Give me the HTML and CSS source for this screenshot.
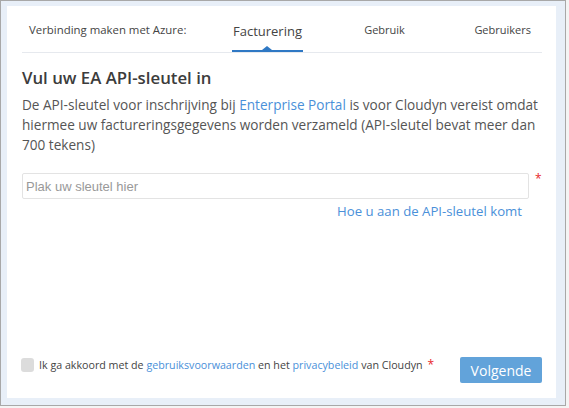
FILE: index.html
```html
<!DOCTYPE html>
<html lang="nl">
<head>
<meta charset="utf-8">
<title>Cloudyn - Facturering</title>
<link rel="stylesheet" href="styles.css">
</head>
<body>
<div class="frame">
  <div class="card">
    <nav class="tabs">
      <div class="tabs-label">Verbinding maken met Azure:</div>
      <div class="tab tab-active"><span class="tab-text">Facturering</span></div>
      <div class="tab">Gebruik</div>
      <div class="tab tab-last">Gebruikers</div>
    </nav>
    <main class="content">
      <h1 class="title">Vul uw EA API-sleutel in</h1>
      <p class="desc">De API-sleutel voor inschrijving bij <a class="link" href="#">Enterprise Portal</a> is voor Cloudyn vereist omdat hiermee uw factureringsgegevens worden verzameld (API-sleutel bevat meer dan 700 tekens)</p>
      <div class="field">
        <input class="key-input" type="text" placeholder="Plak uw sleutel hier">
        <span class="req">*</span>
      </div>
      <div class="help"><a class="link" href="#">Hoe u aan de API-sleutel komt</a></div>
    </main>
    <footer class="footer">
      <label class="agree">
        <span class="checkbox"></span>
        <span>Ik ga akkoord met de <a class="link" href="#">gebruiksvoorwaarden</a> en het <a class="link" href="#">privacybeleid</a> van Cloudyn <span class="req req-inline">*</span></span>
      </label>
      <button class="btn" type="button">Volgende</button>
    </footer>
  </div>
</div>
</body>
</html>
```

FILE: styles.css
```css
* { box-sizing: border-box; }
html, body { margin: 0; padding: 0; background: #f4f4f4; }
body { font-family: "Open Sans", "Noto Sans", sans-serif; color: #555; }

.frame {
  width: 566px;
  height: 406px;
  border: 1px solid #a8a8a8;
  background: #e8eff8;
  padding: 5px 9px 7px 6px;
}
.card {
  height: 100%;
  background: #fff;
  padding: 0 14px 14px 15px;
  display: flex;
  flex-direction: column;
}

.tabs {
  display: grid;
  grid-template-columns: 187px 117px 117px 98px;
  align-items: center;
  height: 47px;
  border-bottom: 1px solid #e6e9ee;
}
.tabs-label { padding-left: 7px; font-size: 11.4px; color: #444; }
.tab { text-align: center; font-size: 11px; color: #444; }
.tab-last { text-align: right; padding-right: 10px; }
.tab-active { font-size: 13px; color: #444; align-self: end; }
.tab-text {
  position: relative;
  display: inline-block;
  padding: 0 1px 10px;
  border-bottom: 2px solid #2f78c4;
}
.tab-text::after {
  content: "";
  position: absolute;
  left: 50%;
  bottom: 0;
  margin-left: -5px;
  border-left: 5px solid transparent;
  border-right: 5px solid transparent;
  border-bottom: 4px solid #2f78c4;
}

.content { flex: 1; }
.title {
  margin: 13px 0 0;
  font-size: 16.8px;
  font-weight: 600;
  color: #3c3c3c;
  line-height: 24px;
}
.desc {
  margin: 5px 0 0;
  font-size: 13.6px;
  line-height: 20px;
  color: #555;
}
.link { color: #4a90d9; text-decoration: none; }

.field { display: flex; align-items: flex-start; margin-top: 18px; }
.key-input {
  width: 507px;
  height: 26px;
  border: 1px solid #e3e3e3;
  border-radius: 2px;
  padding: 0 3px;
  font-family: "Liberation Sans", Arial, sans-serif;
  font-size: 13px;
  color: #555;
  outline: none;
}
.key-input::placeholder { color: #999; }
.req { color: #e8262a; font-size: 12px; margin-left: 6px; line-height: 12px; }
.req-inline { margin-left: 2px; }

.help { text-align: right; padding-right: 20px; margin-top: 3px; font-size: 13.2px; line-height: 18px; }

.footer {
  display: flex;
  align-items: flex-start;
  justify-content: space-between;
  padding-bottom: 1px;
}
.agree { display: flex; align-items: center; font-size: 10.7px; color: #444; margin-top: 1px; margin-left: -1px; }
.checkbox {
  width: 13px;
  height: 14px;
  border-radius: 3px;
  background: #dcdcdc;
  margin-right: 5px;
}
.btn {
  width: 82px;
  height: 26px;
  background: #62a3da;
  border: none;
  border-radius: 2px;
  color: #fff;
  font-family: "Open Sans", "Noto Sans", sans-serif;
  font-size: 14px;
  font-weight: 500;
}
```
